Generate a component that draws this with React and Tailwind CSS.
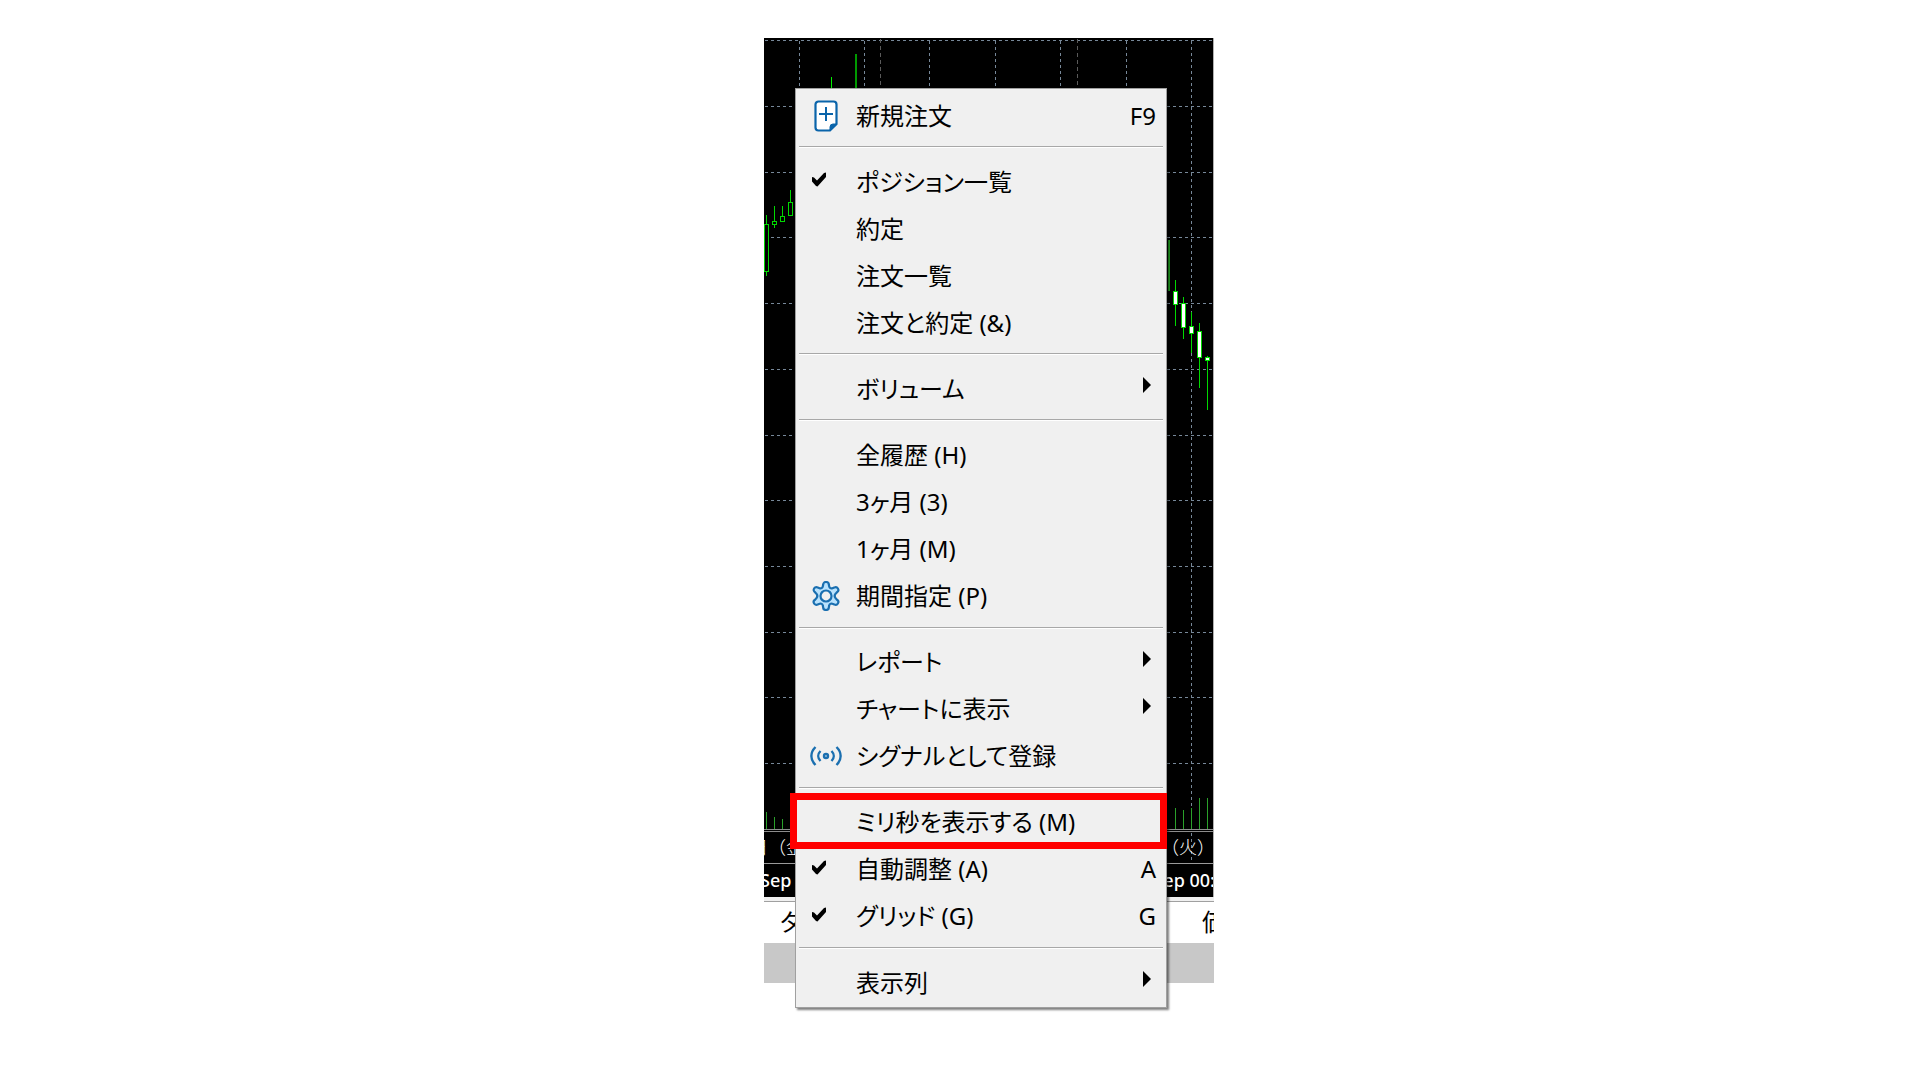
import React from "react";
import clsx from "clsx";

const GRID_X = [35, 100, 165, 231, 296, 362, 427];
const DAY_X = [116, 313];
const GRID_Y = [2, 68, 134, 199, 265, 331, 397, 462, 528, 594, 659, 725];

// x, high, low, body top, body bottom
const BULL = [
  [2, 177, 238, 186, 234],
  [10, 168, 190, 183, 187],
  [18, 168, 184, 178, 184],
  [26, 152, 178, 164, 178],
];
const BEAR = [
  [411, 242, 288, 254, 266],
  [419, 259, 301, 266, 289],
  [427, 274, 315, 289, 295],
  [435, 285, 350, 294, 319],
  [443, 318, 372, 320, 322],
  [451, 294, 321, 294, 321],
];
const WICKS = [
  [67, 39, 52, 1, "#00f000"],
  [91, 16, 52, 2, "#009a00"],
  [404, 202, 253, 2, "#1f9a1f"],
];
const VOLUMES = [
  [2, 774],
  [10, 779],
  [18, 781],
  [411, 770],
  [419, 772],
  [427, 770],
  [435, 760],
  [443, 760],
];

const MENU = [
  [{ label: "新規注文", icon: "order", shortcut: "F9" }],
  [
    { label: "ポジション一覧", checked: true },
    { label: "約定" },
    { label: "注文一覧" },
    { label: "注文と約定 (&)" },
  ],
  [{ label: "ボリューム", submenu: true }],
  [
    { label: "全履歴 (H)" },
    { label: "3ヶ月 (3)" },
    { label: "1ヶ月 (M)" },
    { label: "期間指定 (P)", icon: "gear" },
  ],
  [
    { label: "レポート", submenu: true },
    { label: "チャートに表示", submenu: true },
    { label: "シグナルとして登録", icon: "signal" },
  ],
  [
    { label: "ミリ秒を表示する (M)", highlighted: true },
    { label: "自動調整 (A)", shortcut: "A", checked: true },
    { label: "グリッド (G)", shortcut: "G", checked: true },
  ],
  [{ label: "表示列", submenu: true }],
];

const OrderIcon = () => (
  <svg width="24" height="32" viewBox="0 0 24 32" fill="none">
    <path
      d="M4.5 1.500h15a3 3 0 0 1 3 3V24l-6.500 6.500H4.500a3 3 0 0 1-3-3v-23a3 3 0 0 1 3-3z"
      fill="#fff"
      stroke="#0a64aa"
      strokeWidth="2.200"
    />
    <path d="M22.500 24 16 30.500V27a3 3 0 0 1 3-3z" fill="#0a64aa" stroke="#0a64aa" />
    <path d="M12 7v14M5 14h14" stroke="#0a64aa" strokeWidth="2" />
  </svg>
);

const GearIcon = () => (
  <svg width="28" height="30" viewBox="0 0 28 30" fill="none">
    <path
      d="M11.200 3.500a2.800 2.500 0 0 1 5.600 0l.4 1.900a2.300 2.300 0 0 0 3.200 1.800l1.800-.6a2.600 2.600 0 0 1 2.800 4.600l-1.200 1.400a3.500 3.500 0 0 0 0 4.800l1.200 1.400a2.600 2.600 0 0 1-2.800 4.600l-1.800-.6a2.300 2.300 0 0 0-3.200 1.800l-.4 1.900a2.800 2.500 0 0 1-5.600 0l-.4-1.900a2.300 2.300 0 0 0-3.200-1.800l-1.800.6a2.600 2.600 0 0 1-2.800-4.600l1.200-1.400a3.500 3.500 0 0 0 0-4.800l-1.200-1.400a2.600 2.600 0 0 1 2.800-4.600l1.800.6a2.300 2.300 0 0 0 3.200-1.800z"
      fill="#b9e2fd"
      stroke="#1a6fb0"
      strokeWidth="2.200"
    />
    <circle cx="14" cy="15" r="5.500" fill="#f0f0f0" stroke="#1a6fb0" strokeWidth="2.200" />
  </svg>
);

const SignalIcon = () => (
  <svg width="32" height="20" viewBox="0 0 32 20" fill="none" stroke="#1a6fb0" strokeWidth="2.400">
    <path d="M5.500 1C0 6.500 0 13.500 5.500 19M26.500 1c5.500 5.500 5.500 12.500 0 18" />
    <path d="M10.500 5c-3 3-3 7 0 10M21.500 5c3 3 3 7 0 10" />
    <circle cx="16" cy="10" r="2" />
  </svg>
);

const CheckIcon = () => (
  <svg width="14" height="15" viewBox="0 0 14 15">
    <path d="M0 5l2 .5L5 8.500 12 1l2-.5V5L5.500 14.500 4 14 0 9.500z" fill="#000" />
  </svg>
);

const ArrowIcon = () => (
  <svg width="8" height="16" viewBox="0 0 8 16" className="mb-1">
    <path d="M0 0l8 8-8 8z" fill="#000" />
  </svg>
);

const ICONS = { order: OrderIcon, gear: GearIcon, signal: SignalIcon };

const Chart = () => (
  <svg
    width="450"
    height="826"
    viewBox="0 0 450 826"
    className="block bg-black"
    shapeRendering="crispEdges"
  >
    <g stroke="#778899" strokeDasharray="3 3">
      {GRID_Y.map((y) => (
        <line key={y} x1="1" x2="450" y1={y + 0.5} y2={y + 0.5} />
      ))}
      {GRID_X.map((x) => (
        <line key={x} x1={x + 0.5} x2={x + 0.5} y1="3" y2={x === 427 ? 824 : 790} />
      ))}
    </g>
    <g stroke="#5a5a5a" strokeDasharray="4 3">
      {DAY_X.map((x) => (
        <line key={x} x1={x + 0.5} x2={x + 0.5} y1="1" y2="790" />
      ))}
    </g>
    {WICKS.map(([x, top, bottom, width, color]) => (
      <rect key={x} x={x} y={top} width={width} height={bottom - top} fill={color} />
    ))}
    {BULL.map(([x, high, low, top, bottom]) => (
      <g key={x} stroke="#00d800">
        <line x1={x + 0.5} x2={x + 0.5} y1={high} y2={low} />
        <rect x={x - 1.5} y={top + 0.5} width="4" height={bottom - top - 1} fill="#000" />
      </g>
    ))}
    {BEAR.map(([x, high, low, top, bottom]) => (
      <g key={x} stroke="#00d800">
        <line x1={x + 0.5} x2={x + 0.5} y1={high} y2={low} />
        <rect x={x - 1.5} y={top - 0.5} width="4" height={bottom - top + 1} fill="#fff" />
      </g>
    ))}
    {VOLUMES.map(([x, top]) => (
      <rect key={x} x={x} y={top} width="1" height={791 - top} fill="#2aa02a" />
    ))}
    <rect y="791" width="450" height="1" fill="#8c8c8c" />
    <rect y="793" width="450" height="1" fill="#8c8c8c" />
    <rect y="825" width="450" height="1" fill="#9a9a9a" />
  </svg>
);

const MenuItem = ({ item }) => {
  const Icon = ICONS[item.icon];

  return (
    <button
      type="button"
      role={item.checked ? "menuitemcheckbox" : "menuitem"}
      aria-checked={item.checked}
      aria-haspopup={item.submenu ? "menu" : undefined}
      className="relative flex h-[47px] w-full shrink-0 items-center text-left text-2xl"
    >
      <span
        className={clsx(
          "flex w-[60px] shrink-0 items-center",
          item.checked ? "pb-1 pl-4" : "justify-center"
        )}
      >
        {Icon && <Icon />}
        {item.checked && <CheckIcon />}
      </span>
      <span className="flex-1 whitespace-nowrap">{item.label}</span>
      {item.shortcut && <span className="pr-[10px]">{item.shortcut}</span>}
      {item.submenu && (
        <span className="pr-[15px] pb-[3px]">
          <ArrowIcon />
        </span>
      )}
      {item.highlighted && (
        <span className="absolute -top-[6px] -right-px -bottom-[3px] -left-[6px] border-7 border-[#ff0000]" />
      )}
    </button>
  );
};

const ContextMenu = () => (
  <div
    role="menu"
    className="absolute top-[50px] left-[31px] flex min-h-[920px] w-[372px] flex-col border border-[#a0a0a0] bg-[#f0f0f0] pt-[3px] pb-px shadow-[2px_2px_2px_#00000080]"
  >
    {MENU.map((group, i) => (
      <React.Fragment key={i}>
        {i > 0 && (
          <div role="separator" className="mx-[3px] min-h-[19px] flex-1 pt-[7px]">
            <div className="h-[2px] border-t border-b border-t-[#a8a8a8] border-b-white" />
          </div>
        )}
        {group.map((item) => (
          <MenuItem key={item.label} item={item} />
        ))}
      </React.Fragment>
    ))}
  </div>
);

const App = () => {
  return (
    <main className="flex min-h-screen justify-center bg-white pt-[38px] pb-[72px] pl-[58px] font-['Noto_Sans','Noto_Sans_CJK_JP',sans-serif] text-black [font-feature-settings:'palt']">
      <section className="relative w-[450px] shrink-0">
        <div className="overflow-hidden border-r border-[#b0b0b0]">
          <div className="relative text-lg leading-8 whitespace-nowrap text-white [font-feature-settings:normal] [text-spacing-trim:space-all]">
            <Chart />
            <div className="absolute inset-x-0 bottom-px flex justify-between font-light">
              <span className="-ml-[14px]">日（金</span>
              <span className="-mr-[2px]">（火）</span>
            </div>
          </div>
          <div className="flex h-[33px] items-center justify-between bg-black pb-[2px] text-lg font-medium whitespace-nowrap text-white">
            <span className="-ml-1">Sep</span>
            <span className="-mr-[2px]">Sep 00:</span>
          </div>
        </div>
        <div className="h-1 bg-[#f0f0f0]" />
        <div className="overflow-hidden">
          <table className="w-full table-fixed border-t border-[#a0a0a0] text-left text-2xl">
            <thead>
              <tr className="h-[41px]">
                <th className="pl-4 font-normal">タ</th>
                <th className="w-[12px] p-0 font-normal">価</th>
              </tr>
            </thead>
            <tbody>
              <tr className="h-10 bg-[#c8c8c8]">
                <td />
                <td />
              </tr>
            </tbody>
          </table>
        </div>
        <ContextMenu />
      </section>
    </main>
  );
};

export default App;
